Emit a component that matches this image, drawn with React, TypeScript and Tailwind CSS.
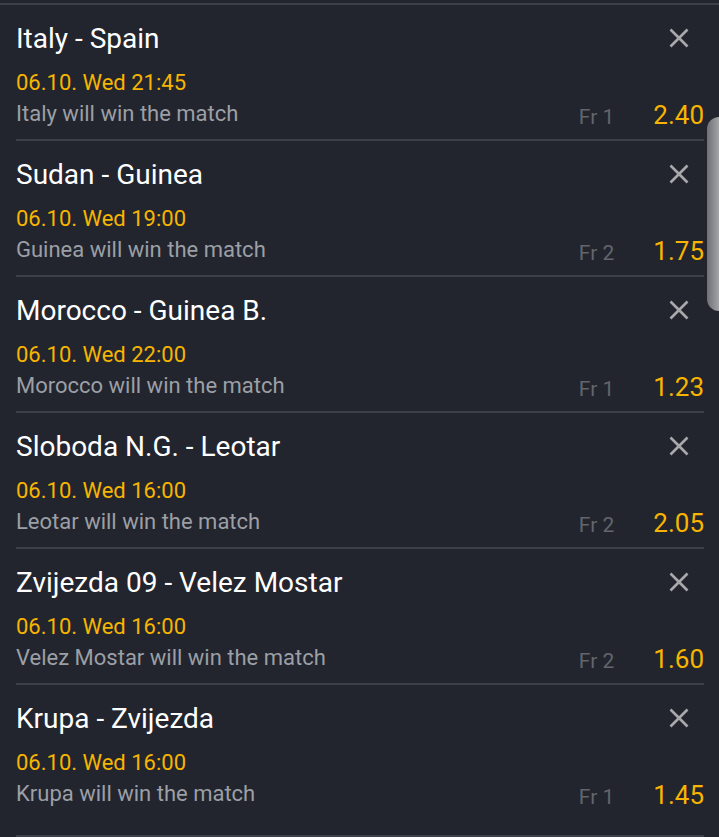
const bets = [
  { match: 'Italy - Spain', time: '06.10. Wed 21:45', pick: 'Italy will win the match', fr: 'Fr 1', odd: '2.40' },
  { match: 'Sudan - Guinea', time: '06.10. Wed 19:00', pick: 'Guinea will win the match', fr: 'Fr 2', odd: '1.75' },
  { match: 'Morocco - Guinea B.', time: '06.10. Wed 22:00', pick: 'Morocco will win the match', fr: 'Fr 1', odd: '1.23' },
  { match: 'Sloboda N.G. - Leotar', time: '06.10. Wed 16:00', pick: 'Leotar will win the match', fr: 'Fr 2', odd: '2.05' },
  { match: 'Zvijezda 09 - Velez Mostar', time: '06.10. Wed 16:00', pick: 'Velez Mostar will win the match', fr: 'Fr 2', odd: '1.60' },
  { match: 'Krupa - Zvijezda', time: '06.10. Wed 16:00', pick: 'Krupa will win the match', fr: 'Fr 1', odd: '1.45' },
];

function CloseIcon() {
  return (
    <svg viewBox="0 0 20 20" className="w-[20px] h-[20px]" fill="none" stroke="#a7a9ad" strokeWidth="2.6">
      <path d="M1.5 1.5 L18.5 18.5 M18.5 1.5 L1.5 18.5" />
    </svg>
  );
}

export default function App() {
  return (
    <div className="relative w-full h-[837px] overflow-hidden bg-[#22252e] font-['Roboto',sans-serif]">
      <div className="mt-[3px] h-[2px] bg-[#3d4048]" />

      {bets.map((b, i) => (
        <div
          key={i}
          className={`ml-4 mr-[15px] border-b-2 border-[#3d4048] pt-[16px] ${i === bets.length - 1 ? 'pb-[25px]' : 'pb-[9px]'}`}
        >
          <div className="flex h-[36px] items-center justify-between">
            <span className="text-[28px] leading-[36px] text-white">{b.match}</span>
            <span className="mr-[15px] flex -translate-y-[1px]">
              <CloseIcon />
            </span>
          </div>
          <div className="mt-[14px] text-[22px] leading-[24px] text-[#f7b500]">{b.time}</div>
          <div className="mt-[5px] flex h-[30px] items-end justify-between">
            <span className="pb-[4px] text-[22px] leading-[24px] text-[#9c9fa5]">{b.pick}</span>
            <div className="flex items-end">
              <span className="translate-x-[1px] translate-y-[1px] text-[21px] leading-[28px] text-[#62656c]">{b.fr}</span>
              <span className="ml-[40px] -translate-y-[1px] text-[26px] leading-[28px] text-[#f7b500]">{b.odd}</span>
            </div>
          </div>
        </div>
      ))}

      {/* scroll handle */}
      <div className="absolute right-0 top-[117px] h-[194px] w-[12px] rounded-l-[14px] bg-gradient-to-r from-[#6d7075] to-[#a3a5a8]" />
    </div>
  );
}
